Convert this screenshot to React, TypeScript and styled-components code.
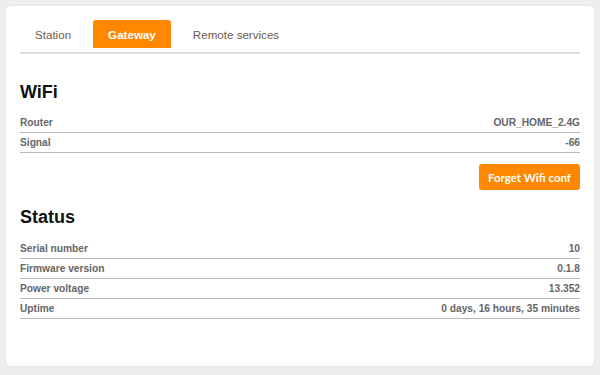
import React, {useState} from 'react';
import styled, {createGlobalStyle} from 'styled-components';

const Accent = '#ff8800';

const GlobalStyle = createGlobalStyle`
    html, body {
        margin: 0;
        background: #eeeeee;
        font-family: "Liberation Sans", Arial, sans-serif;
    }
    body {
        padding: 6px;
        box-sizing: border-box;
    }
`;

const Card = styled.div`
    box-sizing: border-box;
    background: white;
    border-radius: 5px;
    box-shadow: 0 0 3px rgba(0,0,0,0.08);
    padding: 14px 14px 47px;
`;

const TabBar = styled.div`
    display: flex;
    gap: 7px;
    padding-bottom: 4px;
    border-bottom: 2px solid #dddddd;
`;

const Tab = styled.button<{active?: boolean}>`
    height: 28px;
    padding: 0 15px;
    border: none;
    border-radius: 3px 3px 0 0;
    font-family: "Liberation Sans", Arial, sans-serif;
    font-size: 11.6px;
    font-weight: ${p => p.active ? 'bold' : 'normal'};
    color: ${p => p.active ? 'white' : '#6f5b4a'};
    background: ${p => p.active ? Accent : 'transparent'};
    cursor: pointer;
`;

const Heading = styled.h2`
    margin: 0;
    font-size: 18px;
    line-height: 21px;
    font-weight: bold;
    color: #111;
`;

const Section = styled.section<{top: number}>`
    margin-top: ${p => p.top}px;
`;

const Table = styled.div<{gap: number}>`
    margin-top: ${p => p.gap}px;
    display: flex;
    flex-direction: column;
`;

const Row = styled.div`
    display: flex;
    justify-content: space-between;
    align-items: center;
    height: 19px;
    border-bottom: 1px solid #b9b9b9;
    font-size: 10.2px;
    font-weight: bold;
    color: #666666;
`;

const Actions = styled.div`
    display: flex;
    justify-content: flex-end;
    margin-top: 11px;
`;

const ActionButton = styled.button`
    height: 26px;
    padding: 0 9px;
    border: none;
    border-radius: 3px;
    background: ${Accent};
    color: white;
    font-family: Lato, "Open Sans", sans-serif;
    font-size: 11.5px;
    font-weight: bold;
    cursor: pointer;
`;

const wifi: Array<[string, string]> = [
    ["Router", "OUR_HOME_2.4G"],
    ["Signal", "-66"],
];

const status: Array<[string, string]> = [
    ["Serial number", "10"],
    ["Firmware version", "0.1.8"],
    ["Power voltage", "13.352"],
    ["Uptime", "0 days, 16 hours, 35 minutes"],
];

const App: React.FC = () => {
    const [tab, setTab] = useState("Gateway");
    const tabs = ["Station", "Gateway", "Remote services"];

    return (
        <>
            <GlobalStyle />
            <Card>
                <TabBar>
                    {tabs.map(t => <Tab key={t} active={t === tab} onClick={() => setTab(t)}>{t}</Tab>)}
                </TabBar>
                <Section top={28}>
                    <Heading>WiFi</Heading>
                    <Table gap={10}>
                        {wifi.map(([k, v]) => <Row key={k}><span>{k}</span><span>{v}</span></Row>)}
                    </Table>
                    <Actions>
                        <ActionButton>Forget Wifi conf</ActionButton>
                    </Actions>
                </Section>
                <Section top={17}>
                    <Heading>Status</Heading>
                    <Table gap={11}>
                        {status.map(([k, v]) => <Row key={k}><span>{k}</span><span>{v}</span></Row>)}
                    </Table>
                </Section>
            </Card>
        </>
    );
}

export default App;
